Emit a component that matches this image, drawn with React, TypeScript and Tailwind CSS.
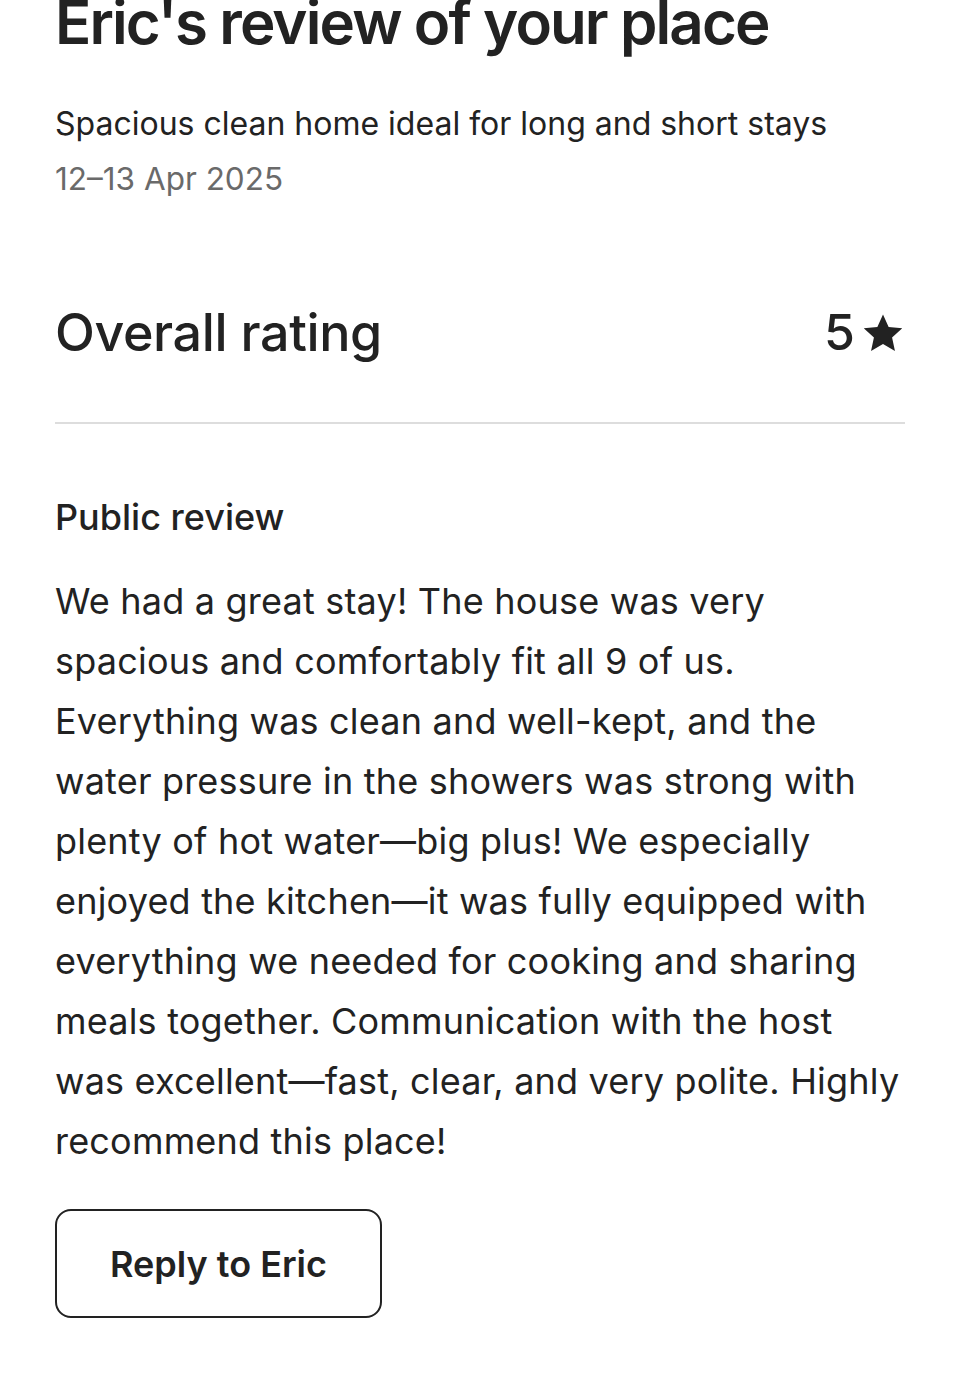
import React from 'react'

const StarIcon = () => (
  <svg viewBox="0 0 32 32" className="w-[44px] h-[44px]" fill="#222222">
    <path d="M16 2.5l4.1 9.1 9.9 1-7.4 6.7 2.1 9.7L16 24l-8.7 5 2.1-9.7L2 12.6l9.9-1z" />
  </svg>
)

const reviewText =
  'We had a great stay! The house was very spacious and comfortably fit all 9 of us. Everything was clean and well-kept, and the water pressure in the showers was strong with plenty of hot water\u2014big plus! We especially enjoyed the kitchen\u2014it was fully equipped with everything we needed for cooking and sharing meals together. Communication with the host was excellent\u2014fast, clear, and very polite. Highly recommend this place!'

export default function App() {
  return (
    <div
      className="w-[960px] h-[1375px] overflow-hidden bg-white text-[#222222]"
      style={{ fontFamily: 'Inter, "Noto Sans", sans-serif' }}
    >
      <div className="px-[55px]">
        {/* Header */}
        <h1 className="-mt-[14px] text-[60px] leading-[72px] font-semibold tracking-[-1.9px]">
          Eric's review of your place
        </h1>
        <p className="mt-[46px] text-[32px] leading-[40px]">
          Spacious clean home ideal for long and short stays
        </p>
        <p className="mt-[15px] text-[31.5px] leading-[40px] text-[#6a6a6a]">12–13 Apr 2025</p>

        {/* Rating */}
        <div className="mt-[96px] flex items-center justify-between">
          <h2 className="text-[52px] leading-[64px] font-medium tracking-[-0.4px]">Overall rating</h2>
          <div className="flex items-center gap-[6px] text-[50px] font-medium">
            <span>5</span>
            <StarIcon />
          </div>
        </div>
        <div className="mt-[52px] h-[2px] bg-[#dddddd]" />

        {/* Public review */}
        <h3 className="mt-[71px] text-[36px] leading-[44px] font-medium">Public review</h3>
        <p className="mt-[32px] text-[36px] leading-[60px] tracking-[0.2px]">{reviewText}</p>

        <button className="mt-[38px] w-[327px] h-[109px] rounded-[16px] border-2 border-[#222222] text-[36px] font-semibold">
          Reply to Eric
        </button>
      </div>
    </div>
  )
}
